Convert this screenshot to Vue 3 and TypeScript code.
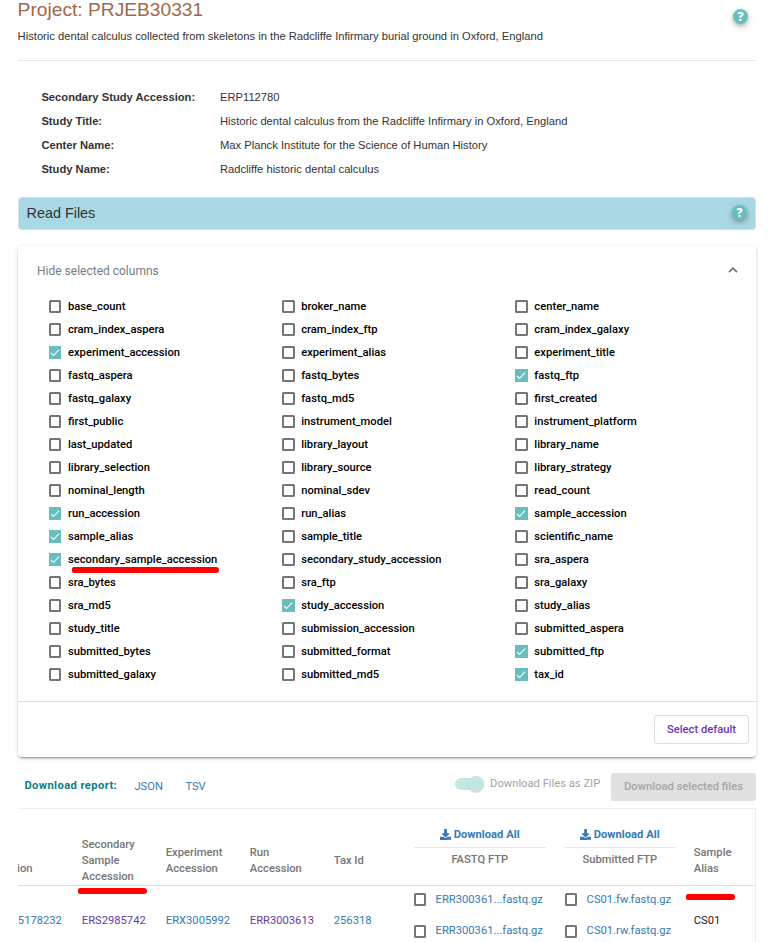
<script setup lang="ts">
import { ref } from 'vue'

interface Detail {
  label: string
  value: string
}

const details: Detail[] = [
  { label: 'Secondary Study Accession:', value: 'ERP112780' },
  { label: 'Study Title:', value: 'Historic dental calculus from the Radcliffe Infirmary in Oxford, England' },
  { label: 'Center Name:', value: 'Max Planck Institute for the Science of Human History' },
  { label: 'Study Name:', value: 'Radcliffe historic dental calculus' },
]

const columns: string[] = [
  'base_count', 'broker_name', 'center_name',
  'cram_index_aspera', 'cram_index_ftp', 'cram_index_galaxy',
  'experiment_accession', 'experiment_alias', 'experiment_title',
  'fastq_aspera', 'fastq_bytes', 'fastq_ftp',
  'fastq_galaxy', 'fastq_md5', 'first_created',
  'first_public', 'instrument_model', 'instrument_platform',
  'last_updated', 'library_layout', 'library_name',
  'library_selection', 'library_source', 'library_strategy',
  'nominal_length', 'nominal_sdev', 'read_count',
  'run_accession', 'run_alias', 'sample_accession',
  'sample_alias', 'sample_title', 'scientific_name',
  'secondary_sample_accession', 'secondary_study_accession', 'sra_aspera',
  'sra_bytes', 'sra_ftp', 'sra_galaxy',
  'sra_md5', 'study_accession', 'study_alias',
  'study_title', 'submission_accession', 'submitted_aspera',
  'submitted_bytes', 'submitted_format', 'submitted_ftp',
  'submitted_galaxy', 'submitted_md5', 'tax_id',
]

const defaults = [
  'experiment_accession', 'fastq_ftp', 'run_accession', 'sample_accession', 'sample_alias',
  'secondary_sample_accession', 'study_accession', 'submitted_ftp', 'tax_id',
]

const selected = ref<Set<string>>(new Set(defaults))

function toggle(name: string): void {
  const next = new Set(selected.value)
  if (!next.delete(name)) next.add(name)
  selected.value = next
}

function selectDefault(): void {
  selected.value = new Set(defaults)
}

const fastqFiles = ['ERR300361...fastq.gz', 'ERR300361...fastq.gz']
const submittedFiles = ['CS01.fw.fastq.gz', 'CS01.rw.fastq.gz']
</script>

<template>
  <main class="page">
    <header class="head">
      <div>
        <h1 class="title">Project: PRJEB30331</h1>
        <p class="desc">Historic dental calculus collected from skeletons in the Radcliffe Infirmary burial ground in Oxford, England</p>
      </div>
      <span class="help">?</span>
    </header>

    <dl class="details">
      <div v-for="d in details" :key="d.label" class="detail">
        <dt>{{ d.label }}</dt>
        <dd>{{ d.value }}</dd>
      </div>
    </dl>

    <div class="bar">
      <h2>Read Files</h2>
      <span class="help">?</span>
    </div>

    <section class="card">
      <div class="card-head">
        <span>Hide selected columns</span>
        <svg class="chevron" viewBox="0 0 10 6"><path d="M1 5.2 5 1.2l4 4" /></svg>
      </div>
      <div class="options">
        <div v-for="c in columns" :key="c" class="option" @click="toggle(c)">
          <span class="box" :class="{ on: selected.has(c) }">
            <svg v-if="selected.has(c)" viewBox="0 0 12 13"><path d="M2 7 4.5 9.5 10.1 3.6" /></svg>
          </span>
          <span class="option-name">{{ c }}<i v-if="c === 'secondary_sample_accession'" class="mark mark-option"></i></span>
        </div>
      </div>
      <div class="card-foot">
        <button class="default-btn" @click="selectDefault">Select default</button>
      </div>
    </section>

    <div class="toolbar">
      <span class="report">Download report:</span>
      <a class="fmt json">JSON</a>
      <a class="fmt">TSV</a>
      <span class="zip"><span class="switch"><span class="knob"></span></span><span>Download Files as ZIP</span></span>
      <button class="download-btn" disabled>Download selected files</button>
    </div>

    <section class="table">
      <div class="row thead">
        <div class="th">Sample Accession</div>
        <div class="th">Secondary Sample Accession<i class="mark mark-secondary"></i></div>
        <div class="th">Experiment Accession</div>
        <div class="th">Run Accession</div>
        <div class="th">Tax Id</div>
        <div v-for="name in ['FASTQ FTP', 'Submitted FTP']" :key="name" class="th files-head">
          <a class="all">
            <svg viewBox="0 0 512 512"><path d="M216 0h80c13 0 24 11 24 24v168h88c18 0 27 21 14 34L270 378c-8 7-20 7-28 0L90 226c-13-13-4-34 14-34h88V24c0-13 11-24 24-24zm296 376v112c0 13-11 24-24 24H24c-13 0-24-11-24-24V376c0-13 11-24 24-24h147l49 49c20 20 52 20 72 0l49-49h147c13 0 24 11 24 24zM388 464a20 20 0 1 0-40 0 20 20 0 0 0 40 0zm64 0a20 20 0 1 0-40 0 20 20 0 0 0 40 0z" /></svg>
            <span>Download All</span>
          </a>
          <span class="files-name">{{ name }}</span>
        </div>
        <div class="th">Sample Alias<i class="mark mark-alias"></i></div>
      </div>
      <div class="row tbody">
        <a class="td">SAMEA5178232</a>
        <a class="td visited">ERS2985742</a>
        <a class="td">ERX3005992</a>
        <a class="td visited">ERR3003613</a>
        <a class="td">256318</a>
        <div class="files">
          <span v-for="(f, i) in fastqFiles" :key="i" class="file"><span class="box"></span><a>{{ f }}</a></span>
        </div>
        <div class="files">
          <span v-for="(f, i) in submittedFiles" :key="i" class="file"><span class="box"></span><a>{{ f }}</a></span>
        </div>
        <span class="td plain">CS01</span>
      </div>
    </section>
  </main>
</template>

<style>
body {
  background: #fff;
}
</style>

<style scoped>
* {
  box-sizing: border-box;
}

.page {
  height: 942px;
  overflow: hidden;
  padding: 0 18px;
  font: 11.2px/16px Roboto, "Liberation Sans", sans-serif;
  color: #212121;
}

h1, h2, p, dl, dd {
  margin: 0;
  font-weight: 400;
}

.head {
  display: flex;
  justify-content: space-between;
  align-items: flex-start;
  height: 61px;
  margin-left: -0.4px;
  border-bottom: 1px solid #e8e8e8;
  font-family: "Liberation Sans", Arial, sans-serif;
  color: #333;
}

.title {
  font-size: 19.2px;
  line-height: 20px;
  color: #a0694a;
}

.desc {
  margin-top: 8px;
  line-height: 16px;
}

.help {
  display: flex;
  align-items: center;
  justify-content: center;
  flex: none;
  width: 15px;
  height: 15px;
  border-radius: 50%;
  background: #68bebd;
  color: #fff;
  font: 800 12px/15px "Open Sans", sans-serif;
  box-shadow: 0 2px 4px rgba(0, 0, 0, 0.25), 0 3px 10px rgba(0, 0, 0, 0.12);
}

.head .help {
  margin: 8.5px 8px 0 0;
}

.details {
  padding: 24px 0 16px 23.4px;
  font-family: "Liberation Sans", Arial, sans-serif;
  color: #333;
}

.detail {
  display: flex;
  line-height: 24px;
}

.detail dt {
  width: 178.6px;
  font-weight: 700;
}

.bar {
  display: flex;
  align-items: center;
  justify-content: space-between;
  width: 738px;
  height: 33px;
  padding: 0 8px 1px 7.5px;
  border: 1px solid #d8dcde;
  border-radius: 4px;
  background: #a8d8e4;
}

.bar .help {
  margin-bottom: 1px;
}

.bar h2 {
  font: 14.4px/20px "Liberation Sans", Arial, sans-serif;
  color: #333;
}

.card {
  width: 738px;
  height: 511px;
  margin-top: 16px;
  border-radius: 4px;
  background: #fff;
  box-shadow: 0 3px 1px -2px rgba(0, 0, 0, 0.2), 0 2px 2px rgba(0, 0, 0, 0.14), 0 1px 5px rgba(0, 0, 0, 0.12);
}

.card-head {
  display: flex;
  align-items: center;
  justify-content: space-between;
  height: 49px;
  padding: 0 18px 0 19px;
  font-size: 12px;
  color: #7b7b7b;
}

.chevron {
  width: 10px;
  height: 6px;
  margin-bottom: 2px;
  fill: none;
  stroke: #757575;
  stroke-width: 1.8;
}

.options {
  display: grid;
  grid-template-columns: 233.2px 233.2px 1fr;
  grid-auto-rows: 23px;
  padding-left: 30.8px;
}

.option {
  display: flex;
  align-items: center;
  gap: 6.6px;
}

.option-name {
  position: relative;
  font-weight: 500;
  color: #000;
}

.box {
  flex: none;
  width: 12px;
  height: 13px;
  border: 2px solid #757575;
  border-radius: 1.5px;
}

.option .box {
  width: 12.6px;
}

.box.on {
  display: flex;
  border: 0;
  border-radius: 0;
  background: #68bebd;
}

.box svg {
  width: 12px;
  height: 13px;
  fill: none;
  stroke: #eefafa;
  stroke-width: 1.1;
}

.card-foot {
  display: flex;
  justify-content: flex-end;
  height: 56px;
  margin-top: 15px;
  padding: 13px 7px 0;
  border-top: 1px solid #dedede;
}

button {
  padding: 0;
  border: 0;
  border-radius: 3px;
  font: 500 11.2px/16px Roboto, sans-serif;
}

.default-btn {
  width: 95px;
  height: 29px;
  border: 1px solid #dcdcdc;
  background: #fff;
  color: #6d35b7;
}

.toolbar {
  display: flex;
  align-items: center;
  width: 738px;
  height: 28px;
  margin-top: 16px;
  padding-left: 6.4px;
}

.report {
  width: 110px;
  padding-bottom: 3px;
  font-weight: 700;
  letter-spacing: 0.4px;
  color: #0b8083;
}

.fmt {
  padding-bottom: 1px;
  color: #337ab7;
}

.json {
  width: 51px;
}

.zip {
  display: flex;
  align-items: center;
  gap: 6px;
  margin-left: auto;
  padding-bottom: 7px;
  color: #a3a3a3;
}

.switch {
  display: flex;
  align-items: center;
  justify-content: flex-end;
  width: 29px;
  height: 12px;
  margin-top: 1px;
  border-radius: 6px;
  background: #c3e5e4;
}

.knob {
  width: 16px;
  height: 16px;
  border-radius: 50%;
  background: #c3e5e4;
  box-shadow: 0 1px 1px rgba(0, 0, 0, 0.12);
}

.download-btn {
  width: 145px;
  height: 28px;
  margin-left: 10.8px;
  background: #e0e0e0;
  color: #a6a6a6;
}

.table {
  width: 738px;
  height: 140px;
  margin-top: 7px;
  overflow: hidden;
  border-top: 1px solid #eee;
  border-right: 1px solid #eee;
}

.row {
  display: grid;
  grid-template-columns: 101.3px 84px 84px 84px 80px 151px 129px 61px;
  width: 774.3px;
  margin-left: -37.5px;
}

.thead {
  height: 77px;
  padding-top: 28px;
  border-bottom: 1px solid #dedede;
  align-items: center;
}

.th {
  position: relative;
  padding-right: 24px;
  font-weight: 500;
  color: #757575;
}

.th.files-head {
  display: flex;
  flex-direction: column;
  align-self: start;
  width: 132px;
  margin-top: -10px;
  padding: 0;
  text-align: center;
}

.files-head + .files-head {
  width: 110px;
}

.all {
  display: flex;
  align-items: center;
  justify-content: center;
  gap: 2.6px;
  height: 21px;
  padding-bottom: 4px;
  border-bottom: 1px solid #e6e6e6;
  font-weight: 700;
  color: #337ab7;
}

.all svg {
  width: 11.2px;
  height: 11.2px;
  margin-bottom: 1.5px;
  fill: #337ab7;
}

.files-name {
  margin-top: 4px;
}

.tbody {
  height: 69px;
  align-items: center;
}

.td, .file a {
  color: #337ab7;
}

.td.visited {
  color: #673a9f;
}

.td.plain {
  color: #212121;
}

.files {
  align-self: start;
  padding-top: 5.9px;
}

.file {
  display: flex;
  align-items: center;
  gap: 9.8px;
  height: 16px;
  margin-bottom: 15.2px;
}

.mark {
  position: absolute;
  height: 6px;
  border-radius: 2px 3px 3px 2px;
  background: #f00;
}

.mark-option {
  left: 4px;
  top: 15px;
  width: 147px;
}

.mark-secondary {
  left: -4px;
  top: 51px;
  width: 69px;
}

.mark-alias {
  left: -8px;
  top: 49px;
  width: 49px;
}
</style>
